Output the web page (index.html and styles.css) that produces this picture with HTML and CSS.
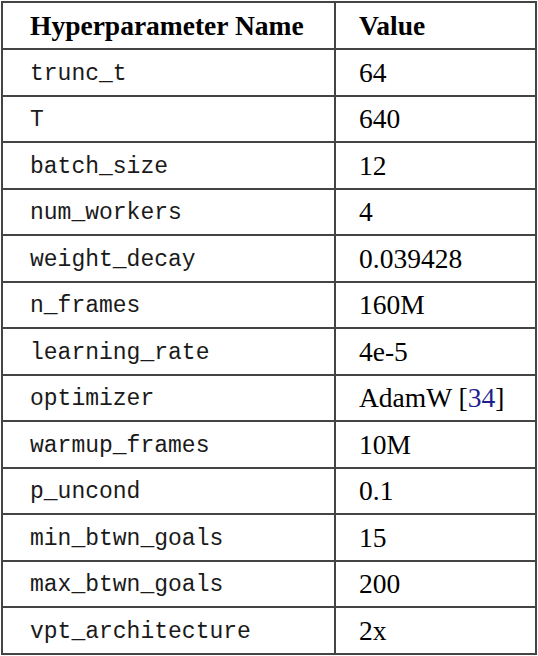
FILE: index.html
```html
<!DOCTYPE html>
<html>
<head>
<meta charset="utf-8">
<link rel="stylesheet" href="styles.css">
</head>
<body>
<table class="hp">
  <thead>
    <tr><th class="name">Hyperparameter Name</th><th class="val">Value</th></tr>
  </thead>
  <tbody>
    <tr><td class="name mono">trunc_t</td><td class="val">64</td></tr>
    <tr><td class="name mono">T</td><td class="val">640</td></tr>
    <tr><td class="name mono">batch_size</td><td class="val">12</td></tr>
    <tr><td class="name mono">num_workers</td><td class="val">4</td></tr>
    <tr><td class="name mono">weight_decay</td><td class="val">0.039428</td></tr>
    <tr><td class="name mono">n_frames</td><td class="val">160M</td></tr>
    <tr><td class="name mono">learning_rate</td><td class="val">4e-5</td></tr>
    <tr><td class="name mono">optimizer</td><td class="val">AdamW [<span class="cite">34</span>]</td></tr>
    <tr><td class="name mono">warmup_frames</td><td class="val">10M</td></tr>
    <tr><td class="name mono">p_uncond</td><td class="val">0.1</td></tr>
    <tr><td class="name mono">min_btwn_goals</td><td class="val">15</td></tr>
    <tr><td class="name mono">max_btwn_goals</td><td class="val">200</td></tr>
    <tr><td class="name mono">vpt_architecture</td><td class="val">2x</td></tr>
  </tbody>
</table>
</body>
</html>
```

FILE: styles.css
```css
html, body {
  margin: 0;
  padding: 0;
  background: #ffffff;
}
body {
  padding: 1px 0 0 1px;
}
.hp {
  border-collapse: collapse;
  width: 536px;
  font-family: "Liberation Serif", "Times New Roman", serif;
  color: #000;
  font-size: 27.5px;
}
.hp th, .hp td {
  border: 2px solid #444;
  text-align: left;
  vertical-align: middle;
  padding: 0;
  line-height: 1;
}
.hp th {
  font-weight: bold;
  font-size: 27.5px;
  height: 45px;
}
.hp td {
  height: 44.5px;
}
.hp .name {
  width: 304px;
  padding-left: 27px;
}
.hp .val {
  padding-left: 23px;
}
.hp td.mono {
  font-family: "Liberation Mono", "Courier New", monospace;
  font-size: 23px;
  color: #1a1a1a;
  padding-top: 4px;
  height: 40.5px;
}
.cite {
  color: #1f1f8f;
}
```
